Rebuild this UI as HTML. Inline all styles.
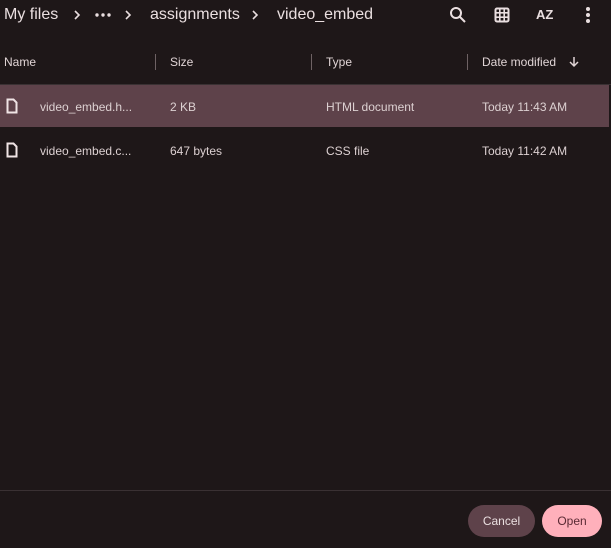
<!DOCTYPE html><html><head><style>
body{margin:0;width:611px;height:548px;background:#1e1718;font-family:"Liberation Sans",sans-serif;color:#e8dcdd;position:relative;overflow:hidden}
.a{position:absolute;white-space:nowrap}
.t{font-size:16px;color:#eadfe0}
.h{font-size:12px;color:#e0d4d5}
.c{font-size:12px;color:#ddd1d2}
.sep{position:absolute;top:54px;width:1px;height:16px;background:#6e6264}
</style></head><body>
<div class="a t" style="left:4px;top:6px">My files</div>
<svg class="a" style="left:73px;top:10px" width="8" height="10"><path d="M2 1l4 4-4 4" stroke="#eadfe0" stroke-width="1.6" fill="none"/></svg>
<svg class="a" style="left:95px;top:13px" width="16" height="4"><circle cx="2" cy="2" r="1.7" fill="#eadfe0"/><circle cx="8" cy="2" r="1.7" fill="#eadfe0"/><circle cx="14" cy="2" r="1.7" fill="#eadfe0"/></svg>
<svg class="a" style="left:124px;top:10px" width="8" height="10"><path d="M2 1l4 4-4 4" stroke="#eadfe0" stroke-width="1.6" fill="none"/></svg>
<div class="a t" style="left:150px;top:6px">assignments</div>
<svg class="a" style="left:251px;top:10px" width="8" height="10"><path d="M2 1l4 4-4 4" stroke="#eadfe0" stroke-width="1.6" fill="none"/></svg>
<div class="a t" style="left:277px;top:6px">video_embed</div>
<svg class="a" style="left:449px;top:6px" width="18" height="18" viewBox="0 0 18 18"><circle cx="7" cy="7" r="5" fill="none" stroke="#eadfe0" stroke-width="2"/><path d="M11 11l5 5" stroke="#eadfe0" stroke-width="2"/></svg>
<svg class="a" style="left:494px;top:7px" width="16" height="16" viewBox="0 0 16 16"><rect x="1.5" y="1.5" width="13" height="13" rx="1.5" fill="none" stroke="#eadfe0" stroke-width="2"/><path d="M5.8 2v12M10.2 2v12M2 5.8h12M2 10.2h12" stroke="#eadfe0" stroke-width="1.6"/></svg>
<div class="a" style="left:536px;top:7px;font-size:13px;font-weight:bold;color:#eadfe0">AZ</div>
<svg class="a" style="left:584px;top:6px" width="8" height="18"><circle cx="4" cy="3" r="2" fill="#eadfe0"/><circle cx="4" cy="9" r="2" fill="#eadfe0"/><circle cx="4" cy="15" r="2" fill="#eadfe0"/></svg>
<div class="a h" style="left:4px;top:55px">Name</div>
<div class="sep" style="left:155px"></div>
<div class="a h" style="left:170px;top:55px">Size</div>
<div class="sep" style="left:311px"></div>
<div class="a h" style="left:326px;top:55px">Type</div>
<div class="sep" style="left:467px"></div>
<div class="a h" style="left:482px;top:55px">Date modified</div>
<svg class="a" style="left:568px;top:56px" width="12" height="12"><path d="M6 1v9M2 6l4 4 4-4" stroke="#e0d4d5" stroke-width="1.5" fill="none"/></svg>
<div class="a" style="left:0;top:84px;width:611px;height:1px;background:#3a3133"></div>
<div class="a" style="left:0;top:85px;width:609px;height:42px;background:#5e424a"></div>
<svg class="a" style="left:6px;top:98px" width="12" height="16" viewBox="0 0 12 16"><path d="M1.5 1.5h6l3 3v10h-9z" fill="none" stroke="#f0e4e5" stroke-width="2"/></svg>
<div class="a c" style="left:40px;top:100px">video_embed.h...</div>
<div class="a c" style="left:170px;top:100px">2 KB</div>
<div class="a c" style="left:326px;top:100px">HTML document</div>
<div class="a c" style="left:482px;top:100px">Today 11:43 AM</div>
<svg class="a" style="left:6px;top:142px" width="12" height="16" viewBox="0 0 12 16"><path d="M1.5 1.5h6l3 3v10h-9z" fill="none" stroke="#f0e4e5" stroke-width="2"/></svg>
<div class="a c" style="left:40px;top:144px">video_embed.c...</div>
<div class="a c" style="left:170px;top:144px">647 bytes</div>
<div class="a c" style="left:326px;top:144px">CSS file</div>
<div class="a c" style="left:482px;top:144px">Today 11:42 AM</div>
<div class="a" style="left:0;top:490px;width:611px;height:1px;background:#3a3133"></div>
<div class="a" style="left:468px;top:505px;width:67px;height:32px;border-radius:16px;background:#5e424a;color:#eadfe0;font-size:12px;text-align:center;line-height:32px">Cancel</div>
<div class="a" style="left:542px;top:505px;width:60px;height:32px;border-radius:16px;background:#ffb0bb;color:#5a2a34;font-size:12px;text-align:center;line-height:32px">Open</div>
</body></html>
